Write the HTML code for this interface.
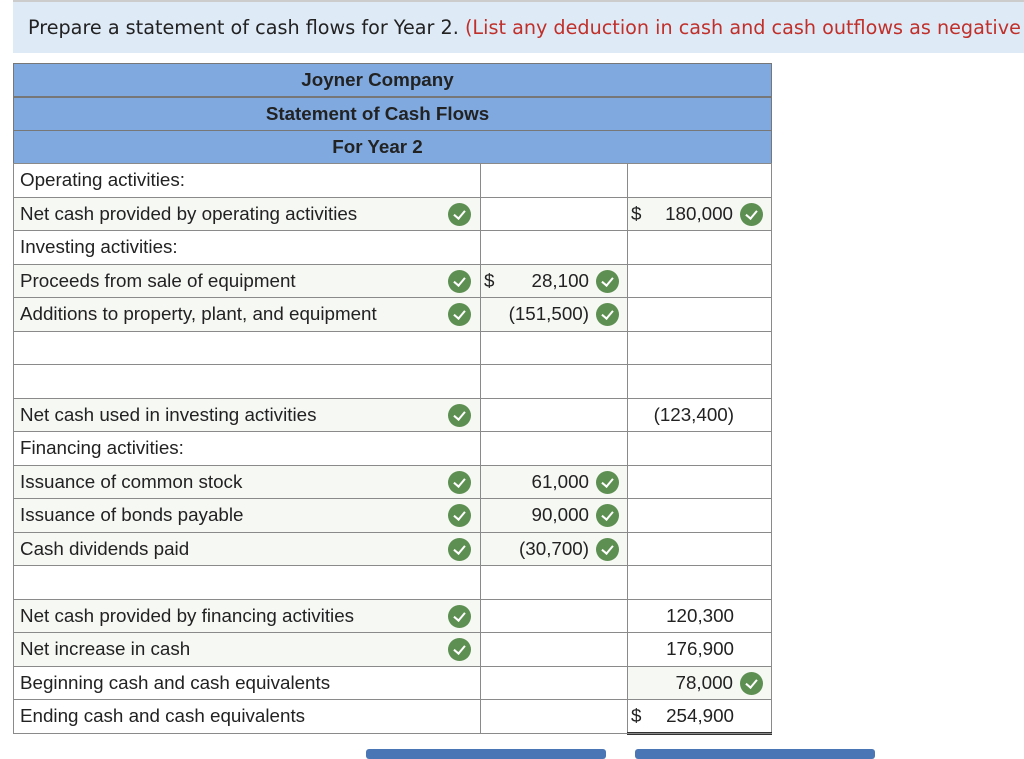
<!DOCTYPE html>
<html><head><meta charset="utf-8"><style>
*{margin:0;padding:0;box-sizing:border-box}
body{width:1024px;height:756px;background:#fff;position:relative;overflow:hidden;font-family:"Liberation Sans",Arial,sans-serif;color:#222}
.banner{position:absolute;left:13px;top:2px;width:1011px;height:51px;background:#dfeaf7;font-family:"DejaVu Sans",sans-serif;font-size:19.2px;line-height:51px;padding-left:15px;white-space:nowrap;color:#222;overflow:hidden}
.banner span{color:#c0302a}
.tabs{position:absolute;top:0;left:13px;width:1011px;height:2px;background:#ccc}
.c{position:absolute;border:1px solid #8a8a8a;font-size:18.8px;line-height:32px;white-space:nowrap}
.h{background:#80aadf;text-align:center;font-weight:bold;border-color:#777;font-size:18.8px}
.g{background:#f6f8f4}
.ck{position:absolute;width:23px;height:23px;border-radius:50%;background:#5e8f52}
.ck::after{content:"";position:absolute;left:8px;top:5px;width:5px;height:9px;border:solid #fff;border-width:0 2px 2px 0;transform:rotate(40deg)}
.btn{position:absolute;top:749px;height:10px;width:240px;background:#4a76b5;border-radius:3px}
</style></head><body>
<div class="tabs"></div>
<div class="banner">Prepare a statement of cash flows for Year 2. <span>(List any deduction in cash and cash outflows as negative a</span></div>
<div id="t"></div>
<div class="btn" style="left:366px"></div>
<div class="btn" style="left:635px"></div>
<script>
var t=document.getElementById('t'),h='';
var hd=['Joyner Company','Statement of Cash Flows','For Year 2'];
var ys=[63,97,130];
for(var i=0;i<3;i++)h+='<div class="c h" style="left:13px;top:'+ys[i]+'px;width:759px;height:34px;line-height:32px;padding-right:30px">'+hd[i]+'</div>';
var rows=[
['Operating activities:',0,'',0,'',0],
['Net cash provided by operating activities',1,'',0,'$|180,000',1],
['Investing activities:',0,'',0,'',0],
['Proceeds from sale of equipment',1,'$|28,100',1,'',0],
['Additions to property, plant, and equipment',1,'(151,500)',1,'',0],
['',0,'',0,'',0],
['',0,'',0,'',0],
['Net cash used in investing activities',1,'',0,'(123,400)',0],
['Financing activities:',0,'',0,'',0],
['Issuance of common stock',1,'61,000',1,'',0],
['Issuance of bonds payable',1,'90,000',1,'',0],
['Cash dividends paid',1,'(30,700)',1,'',0],
['',0,'',0,'',0],
['Net cash provided by financing activities',1,'',0,'120,300',0],
['Net increase in cash',1,'',0,'176,900',0],
['Beginning cash and cash equivalents',0,'',0,'78,000',1],
['Ending cash and cash equivalents',0,'',0,'$|254,900',0]];
function val(v,right,ck){var s='';var p=v.split('|');if(p.length>1){s+='<span style="position:absolute;left:3px">'+p[0]+'</span>';v=p[1];}
s+='<span style="position:absolute;right:'+(ck?38:(right))+'px">'+v+'</span>';return s;}
for(var r=0;r<rows.length;r++){var y=163+r*33.5,R=rows[r];
h+='<div class="c'+(R[1]?' g':'')+'" style="left:13px;top:'+y+'px;width:468px;height:34.5px;padding-left:6px">'+R[0]+(R[1]?'<div class="ck" style="left:434px;top:5px"></div>':'')+'</div>';
h+='<div class="c'+(R[3]?' g':'')+'" style="left:480px;top:'+y+'px;width:148px;height:34.5px">'+(R[2]?val(R[2],0,R[3]):'')+(R[3]?'<div class="ck" style="left:115px;top:5px"></div>':'')+'</div>';
h+='<div class="c'+(R[5]?' g':'')+'" style="left:627px;top:'+y+'px;width:145px;height:34.5px">'+(R[4]?val(R[4],37,R[5]):'')+(R[5]?'<div class="ck" style="left:112px;top:5px"></div>':'')+'</div>';}
h+='<div style="position:absolute;left:627px;top:732px;width:145px;height:3px;border-top:1px solid #333;border-bottom:1px solid #333"></div>';
t.innerHTML=h;
</script>
</body></html>
